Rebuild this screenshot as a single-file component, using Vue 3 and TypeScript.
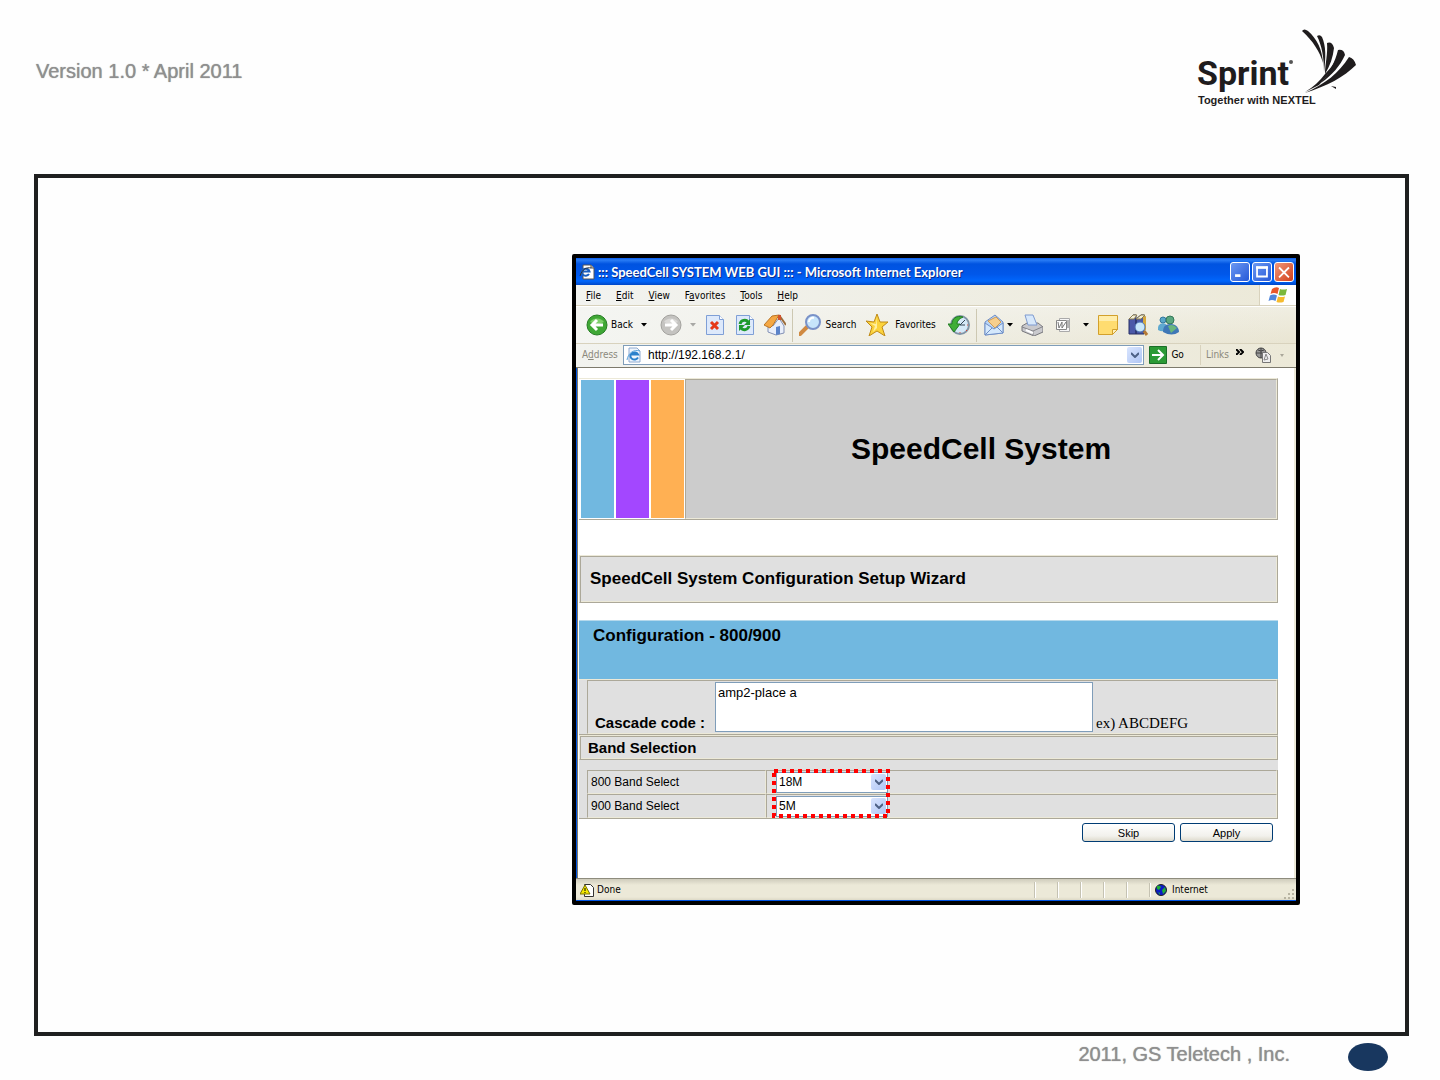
<script setup lang="ts">
import { ref } from 'vue'

interface MenuItem {
  before: string
  key: string
  after: string
}

interface Band {
  id: string
  label: string
  options: string[]
  value: string
}

const menus: MenuItem[] = [
  { before: '', key: 'F', after: 'ile' },
  { before: '', key: 'E', after: 'dit' },
  { before: '', key: 'V', after: 'iew' },
  { before: 'F', key: 'a', after: 'vorites' },
  { before: '', key: 'T', after: 'ools' },
  { before: '', key: 'H', after: 'elp' },
]

const address = ref('http://192.168.2.1/')
const cascade = ref('amp2-place a')
const bands = ref<Band[]>([
  { id: 'band-800', label: '800 Band Select', options: ['18M'], value: '18M' },
  { id: 'band-900', label: '900 Band Select', options: ['5M'], value: '5M' },
])
</script>

<template>
  <div class="sheet">
    <header class="sheet-head">
      <p class="note">Version 1.0 * April 2011</p>
      <svg class="logo" viewBox="1190 20 180 100" role="img" aria-label="Sprint">
        <text x="1197" y="85" class="logo-name">Sprint</text>
        <circle cx="1291" cy="62" r="2" fill="#555" />
        <text x="1198" y="104" class="logo-line">Together with NEXTEL</text>
        <g fill="#1f1c1d">
          <path d="M1302 31q2-3 6 0c9 8 14 18 15 32c-3-11-10-22-21-32z" />
          <path d="M1317 36q3-2 5 1c4 9 4 20 2 35c0-14-2-26-7-36z" />
          <path d="M1327 43q5-2 7 5c-1 9-4 18-9 26c0-10 3-20 2-31z" />
          <path d="M1338 50q6-1 7 5c-5 11-13 20-24 28c9-11 14-21 17-33z" />
          <path d="M1349 57q5 1 7 8c-12 12-29 21-51 28c20-9 34-20 44-36z" />
          <path d="M1325 74q6-6 11-14q-6 14-17 25l-14 7q12-7 20-18z" />
          <path d="M1331 86l5 1v2z" />
        </g>
      </svg>
    </header>

    <main class="frame">
      <section class="window" aria-label="SpeedCell SYSTEM WEB GUI">
        <div class="titlebar">
          <svg class="i16" viewBox="0 0 16 16">
            <path d="M4 1h8l3 3v11H4z" fill="#fff" stroke="#555" />
            <path d="M12 1v3h3" fill="#ccc" stroke="#555" />
            <path d="M10 10a4 3.500 0 1 1 .5-2.500H3" fill="none" stroke="#1a5fc0" stroke-width="2" />
            <path d="M1 12C3 5 8 3 12 4" fill="none" stroke="#333" />
          </svg>
          <h1>::: SpeedCell SYSTEM WEB GUI ::: - Microsoft Internet Explorer</h1>
          <div class="winbtns">
            <button type="button" aria-label="Minimize"><svg viewBox="0 0 19 20"><path d="M4 14h6" stroke="#fff" stroke-width="3" /></svg></button>
            <button type="button" aria-label="Maximize"><svg viewBox="0 0 19 20"><path d="M4 4v11h11V4" fill="none" stroke="#fff" stroke-width="2" /><path d="M3 5h13" stroke="#fff" stroke-width="3" /></svg></button>
            <button type="button" class="close" aria-label="Close"><svg viewBox="0 0 19 20"><path d="M4 5l11 11M15 5L4 16" stroke="#fff" stroke-width="2" /></svg></button>
          </div>
        </div>

        <div class="menubar">
          <nav>
            <button v-for="m in menus" :key="m.key" type="button">{{ m.before }}<u>{{ m.key }}</u>{{ m.after }}</button>
          </nav>
          <span class="flag">
            <svg viewBox="0 0 20 18">
              <path d="M4 3q4-3 7-1L9.500 8Q6 6 2.500 8z" fill="#e8572a" />
              <path d="M12 3q3 1 7 0l-1.500 6q-4 1-7 0z" fill="#7bb83c" />
              <path d="M2 9.500Q6 7.500 9 9.500L7.500 15Q4 13 .5 15z" fill="#4f86dc" />
              <path d="M10 10.500q3 1 7 0L15.500 16q-4 1-7 0z" fill="#f6bb2e" />
            </svg>
          </span>
        </div>

        <div class="toolbar">
          <button type="button" class="tool">
            <svg class="i22" viewBox="0 0 22 22">
              <circle cx="11" cy="11" r="10" fill="#3fa735" stroke="#267d24" />
              <path d="M4 8a8 7 0 0 1 14 0q-7 4-14 0z" fill="#7ed06b" />
              <path d="M17 11H7M11 6l-5 5l5 5" fill="none" stroke="#fff" stroke-width="3" />
            </svg>
            <span class="w-back">Back</span>
          </button>
          <button type="button" class="drop" aria-label="Back history"><svg viewBox="0 0 6 4"><path d="M0 0h6L3 3.500z" /></svg></button>
          <button type="button" class="tool after-drop" aria-label="Forward">
            <svg class="i22" viewBox="0 0 22 22">
              <circle cx="11" cy="11" r="10" fill="#c4c3c0" stroke="#a3a29e" />
              <path d="M4 8a8 7 0 0 1 14 0q-7 4-14 0z" fill="#dad9d7" />
              <path d="M5 11h10M11 6l5 5l-5 5" fill="none" stroke="#fff" stroke-width="3" />
            </svg>
          </button>
          <button type="button" class="drop faint" aria-label="Forward history"><svg viewBox="0 0 6 4"><path d="M0 0h6L3 3.500z" /></svg></button>
          <button type="button" class="tool" aria-label="Stop">
            <svg class="i22" viewBox="0 0 22 22">
              <path d="M2.500 1.500h13l4 4v15h-17z" fill="#dde9fb" stroke="#7f9fd6" />
              <path d="M15.500 1.500v4h4" fill="#fff" stroke="#7f9fd6" />
              <path d="M7 8l7 7M14 8l-7 7" stroke="#e5391a" stroke-width="3" />
            </svg>
          </button>
          <button type="button" class="tool" aria-label="Refresh">
            <svg class="i22" viewBox="0 0 22 22">
              <path d="M2.500 1.500h13l4 4v15h-17z" fill="#dde9fb" stroke="#7f9fd6" />
              <path d="M15.500 1.500v4h4" fill="#fff" stroke="#7f9fd6" />
              <path d="M6 10c1-4 6-5 8-2M15 12c-1 4-6 5-8 2" fill="none" stroke="#1d9a2c" stroke-width="3" />
              <path d="M16 5v6h-6zM5 17v-6h6z" fill="#1d9a2c" />
            </svg>
          </button>
          <button type="button" class="tool" aria-label="Home">
            <svg class="i22" viewBox="0 0 22 22">
              <path d="M4 10l5 2l6-8l5 8v7l-8 2l-8-3z" fill="#e9effb" stroke="#8391b5" />
              <path d="M0 11L8 2l7-1l-6 10l-3 3z" fill="#f5a843" stroke="#b97526" />
              <path d="M15 1l7 10" stroke="#9a6b3a" stroke-width="2" />
              <path d="M14 1h3v5h-3z" fill="#d2542d" />
              <path d="M12 13l4-1v8l-4 1z" fill="#5b83c9" />
            </svg>
          </button>
          <i class="sep"></i>
          <button type="button" class="tool">
            <svg class="i22" viewBox="0 0 22 22">
              <path d="M1 20l7-7" stroke="#d08a42" stroke-width="4" stroke-linecap="round" />
              <circle cx="14" cy="8" r="7" fill="#c7e5fb" stroke="#7a92c8" stroke-width="2" />
              <path d="M10 8a4 4 0 0 1 5-4" fill="none" stroke="#fff" stroke-width="2" />
            </svg>
            <span class="w-search">Search</span>
          </button>
          <button type="button" class="tool">
            <svg class="i22" viewBox="0 0 22 22">
              <path d="M11 0l3 8l8 0l-6 5l3 9l-8-5l-8 5l3-9l-6-6l8 1z" fill="#fbd33c" stroke="#bf8a18" />
              <path d="M11 3l-1 7l-6-1l5 3l-2 6l4-4z" fill="#fff0a0" />
            </svg>
            <span class="w-fav">Favorites</span>
          </button>
          <button type="button" class="tool" aria-label="History">
            <svg class="i22" viewBox="0 0 22 22">
              <circle cx="12" cy="11" r="9" fill="#d5e9f8" stroke="#8194a5" stroke-width="2" />
              <path d="M12 11l5-5M12 11h5" stroke="#345" />
              <path d="M18 16l1 1M12 18v1M19 11h1" stroke="#d43" />
              <path d="M15 3C8 1 4 5 4 10H0l6 8l6-8H9c0-3 2-5 6-7z" fill="#3eae36" stroke="#237c24" />
            </svg>
          </button>
          <i class="sep"></i>
          <button type="button" class="tool" aria-label="Mail">
            <svg class="i22" viewBox="0 0 22 22">
              <path d="M2 8l10-7l8 7v11l-18 2z" fill="#b9d5f6" stroke="#6f8fc7" />
              <path d="M5 7l8-4l5 5l-6 6z" fill="#f7cf8e" stroke="#d09b55" />
              <path d="M2 9l9 6l9-6v10l-18 2z" fill="#d4e8fc" stroke="#6f8fc7" />
              <path d="M2 21l7-7M20 19l-6-6" stroke="#6f8fc7" />
            </svg>
          </button>
          <button type="button" class="drop tight" aria-label="Mail options"><svg viewBox="0 0 6 4"><path d="M0 0h6L3 3.500z" /></svg></button>
          <button type="button" class="tool" aria-label="Print">
            <svg class="i22" viewBox="0 0 22 22">
              <path d="M1 12l5-3h11l5 4v5l-9 4l-12-5z" fill="#c9c9cd" stroke="#77777c" />
              <path d="M4 1h8l4 10H7z" fill="#d7e8fb" stroke="#7f9bd0" />
              <path d="M1 13l11 4l9-4M12 17v4" fill="none" stroke="#85858a" />
              <path d="M5 16l7 3" stroke="#fff" stroke-width="2" />
            </svg>
          </button>
          <button type="button" class="tool wide" aria-label="Edit">
            <svg class="i16" viewBox="0 0 16 16">
              <path d="M4.500 1.500h10v13h-10z" fill="#f6f6f6" stroke="#aaa" />
              <path d="M1.500 3.500h10v9h-10z" fill="#fff" stroke="#888" />
              <path d="M3 5l1 6l3-6v6l4-6M12 4h2M12 6h2M12 8h2M12 10h2" fill="none" stroke="#777" />
            </svg>
          </button>
          <button type="button" class="drop wide" aria-label="Edit options"><svg viewBox="0 0 6 4"><path d="M0 0h6L3 3.500z" /></svg></button>
          <button type="button" class="tool" aria-label="Discuss">
            <svg class="i22" viewBox="0 0 22 22">
              <path d="M1.500 1.500h19v14l-5 5h-14z" fill="#ffdc70" stroke="#d2a02c" />
              <path d="M2 2h18v5H2z" fill="#ffedaa" />
              <path d="M15.500 20.500v-5h5z" fill="#fff0b8" stroke="#d2a02c" />
            </svg>
          </button>
          <button type="button" class="tool" aria-label="Research">
            <svg class="i22" viewBox="0 0 22 22">
              <path d="M2 5l4-4h3v19H2zM9 5l5-4h3v19H9z" fill="#4b59a8" stroke="#293166" />
              <path d="M2 5h5l3-4H6zM9 5h5l4-4h-4z" fill="#f1eed8" stroke="#8a7c4f" />
              <path d="M16 3l3-1v14h-3z" fill="#d6a83c" />
              <circle cx="13" cy="13" r="5" fill="#c8e7fa" stroke="#4e75b5" />
              <path d="M17 17l3 4" stroke="#b57a35" stroke-width="3" />
            </svg>
          </button>
          <button type="button" class="tool" aria-label="Messenger">
            <svg class="i22" viewBox="0 0 22 22">
              <circle cx="6" cy="6" r="3" fill="#58a6c9" stroke="#34779c" />
              <path d="M1 16q-1-6 5-7q5 1 5 6q-5 4-10 1z" fill="#5fa9d0" />
              <circle cx="13" cy="6" r="4" fill="#5aa77e" stroke="#35785a" />
              <path d="M6 18c0-6 3-8 8-8c5 0 8 4 8 8q-7 5-16 0z" fill="#3f77b6" />
              <path d="M11 12q5-3 9 2l-6 5z" fill="#69b67d" />
            </svg>
          </button>
        </div>

        <div class="addressbar">
          <label for="address">A<u>d</u>dress</label>
          <div class="addressfield">
            <svg class="i16" viewBox="0 0 16 16">
              <path d="M3 1h8l3 3v11H3z" fill="#eef5fd" stroke="#8eaad0" />
              <path d="M12 10.500a4 3.500 0 1 1 0-3H5" fill="none" stroke="#2a81cc" stroke-width="2" />
              <path d="M1 13C2 6 8 2 14 4" fill="none" stroke="#5ba4dd" />
            </svg>
            <input id="address" v-model="address" type="text" />
            <button type="button" class="chev" aria-label="Show addresses"><svg viewBox="0 0 8 6"><path d="M0 1l4 4l4-4" fill="none" stroke="#4d6185" stroke-width="2" /></svg></button>
          </div>
          <button type="button" class="go">
            <svg viewBox="0 0 18 18">
              <path d="M.5.5h17v17H.5z" fill="#2b9a35" stroke="#1b6e28" />
              <path d="M3 9h10M9 4l5 5l-5 5" fill="none" stroke="#fff" stroke-width="2" />
            </svg>
            <span>Go</span>
          </button>
          <div class="links">
            <span>Links</span>
            <svg class="more-links" viewBox="0 0 8 6"><path d="M0 0l3 3l-3 3M4 0l3 3l-3 3" fill="none" stroke="#000" stroke-width="2" /></svg>
            <svg class="i16" viewBox="0 0 16 16">
              <circle cx="6" cy="6" r="5" fill="#999" stroke="#444" />
              <path d="M1 6h10M6 1v10M3 3q3 2 6 0" fill="none" stroke="#444" />
              <path d="M7.500 5.500h5l3 3v7h-8z" fill="#eee" stroke="#777" />
              <path d="M9 13l4-1l-2-5z" fill="none" stroke="#888" />
            </svg>
            <svg class="tiny" viewBox="0 0 4 3"><path d="M0 0h4L2 3z" fill="#aaa79a" /></svg>
          </div>
        </div>

        <div class="page">
          <div class="banner">
            <i class="stripe blue"></i><i class="stripe purple"></i><i class="stripe orange"></i>
            <h2>SpeedCell System</h2>
          </div>
          <h3 class="wizard">SpeedCell System Configuration Setup Wizard</h3>

          <form @submit.prevent>
            <h4 class="config">Configuration - 800/900</h4>
            <div class="cascade">
              <div class="cascade-cell">
                <label for="cascade">Cascade code :</label>
                <textarea id="cascade" v-model="cascade"></textarea>
                <span>ex) ABCDEFG</span>
              </div>
            </div>
            <h4 class="band-title">Band Selection</h4>
            <div class="bands">
              <table>
                <tbody>
                  <tr v-for="(band, i) in bands" :key="band.id">
                    <th scope="row"><label :for="band.id">{{ band.label }}</label></th>
                    <td>
                      <div class="picker">
                        <select :id="band.id" v-model="band.value">
                          <option v-for="o in band.options" :key="o">{{ o }}</option>
                        </select>
                        <span class="chev"><svg viewBox="0 0 8 6"><path d="M0 1l4 4l4-4" fill="none" stroke="#4d6185" stroke-width="2" /></svg></span>
                        <svg v-if="i === 0" class="marker" viewBox="0 0 118 49">
                          <rect x="2" y="2" width="114" height="45" fill="none" stroke="#f00" stroke-width="4" stroke-dasharray="4 4" />
                        </svg>
                      </div>
                    </td>
                  </tr>
                </tbody>
              </table>
            </div>
            <div class="actions">
              <button type="button">Skip</button>
              <button type="submit">Apply</button>
            </div>
          </form>
        </div>

        <footer class="status">
          <svg class="i14" viewBox="0 0 14 14">
            <path d="M4.500 1.500h6l3 3v9h-9z" fill="#fff" stroke="#333" />
            <path d="M5 2l5 9H0z" fill="#f5e900" stroke="#776f00" />
            <path d="M5 5v3M5 9v1" stroke="#000" />
          </svg>
          <span class="done">Done</span>
          <i v-for="n in 5" :key="n" class="pane"></i>
          <span class="zone">
            <svg viewBox="0 0 12 12">
              <circle cx="6" cy="6" r="5.500" fill="#0a1bc4" stroke="#222" />
              <path d="M2 2q3-1 4 1l-2 3l-2-1zM7 6l3-3l1 4l-3 3zM3 8l2 1v2z" fill="#1fae35" />
            </svg>
            Internet
          </span>
          <svg class="grip" viewBox="0 0 11 11"><path d="M8 0h2v2h-2zM8 4h2v2h-2zM8 8h2v2h-2zM4 4h2v2h-2zM4 8h2v2h-2zM0 8h2v2h-2z" fill="#b8b4a2" /></svg>
        </footer>
      </section>
    </main>

    <footer class="sheet-foot">
      <p class="note">2011, GS Teletech , Inc.</p>
      <span class="dot"></span>
    </footer>
  </div>
</template>

<style>
body {
  background: #fefefe;
}
</style>

<style scoped>
.sheet {
  box-sizing: border-box;
  min-height: 100vh;
  min-width: 1240px;
  display: flex;
  flex-direction: column;
  font-family: "Liberation Sans", Arial, sans-serif;
  color: #000;
}
.sheet *,
.sheet *::before {
  box-sizing: border-box;
}
h1, h2, h3, h4, p {
  margin: 0;
}
button {
  font: inherit;
  color: inherit;
  padding: 0;
  border: 0;
  background: none;
}
svg {
  display: block;
  flex: none;
}
i {
  display: block;
  flex: none;
}
.note {
  font-size: 20px;
  line-height: 24px;
  color: #8f8f8f;
  text-shadow: 0 0 1px #8f8f8f;
}
.sheet-head {
  height: 174px;
  padding: 20px 70px 0 36px;
  display: flex;
  justify-content: space-between;
}
.sheet-head .note {
  margin-top: 39px;
}
.logo {
  width: 180px;
  height: 100px;
}
.logo-name {
  font: bold 34px Roboto, sans-serif;
  fill: #1f1c1d;
}
.logo-line {
  font: bold 11px "Liberation Sans", sans-serif;
  fill: #1f1c1d;
}
.frame {
  flex: 1;
  margin: 0 31px 0 34px;
  padding: 76px 0 127px;
  border: 4px solid #1f2020;
  display: grid;
  grid-template-columns: 534fr 728fr 105fr;
  align-items: start;
}
.window {
  grid-column: 2;
  border: 4px solid #000;
  border-radius: 2px;
  background: #ece9d8;
  font-family: "DejaVu Sans Condensed", "DejaVu Sans", sans-serif;
  font-size: 10px;
  line-height: 14px;
}
.i22 {
  width: 22px;
  height: 22px;
}
.i16 {
  width: 16px;
  height: 16px;
}
.i14 {
  width: 14px;
  height: 14px;
}

/* title bar */
.titlebar {
  height: 27px;
  padding: 0 2px 0 3px;
  display: flex;
  align-items: center;
  gap: 3px;
  background: linear-gradient(#0b5be8, #2a7df5 2px, #0053e0 6px, #0057ea 60%, #0066fc 85%, #0047c8);
}
.titlebar h1 {
  flex: 1;
  font: bold 13px/16px Lato, sans-serif;
  color: #fff;
  text-shadow: 1px 1px 0 #0a2d8c;
}
.winbtns {
  display: flex;
  gap: 2px;
}
.winbtns button {
  width: 20px;
  height: 20px;
  border: 1px solid #fff;
  border-radius: 3px;
  background: linear-gradient(135deg, #6b98f2, #2659d8);
}
.winbtns .close {
  background: linear-gradient(135deg, #f0977a, #d3401b);
}
.winbtns svg {
  width: 18px;
  height: 18px;
}

/* menu bar */
.menubar {
  height: 21px;
  display: flex;
  justify-content: space-between;
  background: linear-gradient(90deg, #f2f3f0, #ece9d8);
  border-bottom: 1px solid #d8d2bd;
}
.menubar nav {
  display: flex;
  align-items: center;
  gap: 15px;
  padding: 1px 0 0 10px;
}
.flag {
  width: 37px;
  display: grid;
  place-items: center;
  background: #fff;
  border-left: 1px solid #d8d2bd;
}
.flag svg {
  width: 20px;
  height: 18px;
}

/* toolbar */
.toolbar {
  height: 38px;
  padding-left: 10px;
  display: flex;
  align-items: center;
  gap: 8px;
  border-top: 1px solid #fff;
  border-bottom: 1px solid #d8d2bd;
  background: linear-gradient(90deg, #f4f5f2, #ece9d800), linear-gradient(#f0eee2, #e9e5d2);
}
.tool {
  display: flex;
  align-items: center;
  gap: 3px;
}
.after-drop {
  margin-left: 5px;
}
.wide {
  margin-left: 4px;
}
.w-back {
  width: 22px;
}
.w-search {
  width: 34px;
}
.w-fav {
  width: 49px;
}
.drop svg {
  width: 6px;
  height: 4px;
}
.tight {
  margin-left: -6px;
}
.faint {
  opacity: 0.3;
}
.sep {
  width: 1px;
  height: 33px;
  margin: 0 -2px;
  background: #cdc8b2;
}

/* address bar */
.addressbar {
  height: 24px;
  padding: 1px 12px 2px 6px;
  display: flex;
  align-items: center;
  border-bottom: 1px solid #7d7a6c;
  background: linear-gradient(90deg, #f2f3ef, #ece9d8);
}
.addressbar label {
  width: 41px;
  color: #8b897c;
}
.addressfield {
  flex: 1;
  height: 20px;
  padding: 1px 1px 1px 2px;
  display: flex;
  align-items: center;
  gap: 6px;
  border: 1px solid #7f9db9;
  background: #fff;
}
.addressfield input {
  flex: 1;
  min-width: 0;
  height: 16px;
  padding: 0;
  border: 0;
  outline: 0;
  background: none;
  color: #000;
  font: 12px/16px "Liberation Sans", sans-serif;
}
.chev {
  width: 15px;
  height: 16px;
  display: grid;
  place-items: center;
  border-radius: 2px;
  background: linear-gradient(135deg, #d9e5fe, #b0c6f5);
}
.chev svg {
  width: 8px;
  height: 6px;
}
.go {
  display: flex;
  align-items: center;
  gap: 4px;
  margin-left: 5px;
}
.go svg {
  width: 18px;
  height: 18px;
}
.links {
  display: flex;
  align-items: center;
  height: 20px;
  margin-left: 16px;
  padding-left: 5px;
  border-left: 1px solid #d8d2bd;
  color: #8b897c;
}
.more-links {
  width: 8px;
  height: 6px;
  margin: 0 11px 6px 7px;
}
.tiny {
  width: 4px;
  height: 3px;
  margin-left: 9px;
}

/* web page */
.page {
  height: 510px;
  padding: 10px 16px 0 1px;
  background: #fff;
  border-left: 1px solid #7d7a6c;
  border-right: 1px solid #ece9d8;
  box-shadow: -1px 0 0 #0054e3;
  margin-left: 1px;
  margin-right: 1px;
  font-family: "Liberation Sans", Arial, sans-serif;
}
.banner {
  height: 142px;
  display: flex;
  padding-left: 2px;
  border: 1px solid #aca899;
  border-top-color: #ece9d8;
  border-left: 0;
}
.stripe {
  width: 33px;
  margin: 1px 2px 1px 0;
}
.blue {
  background: #71b8e0;
}
.purple {
  background: #a347ff;
}
.orange {
  background: #ffb053;
  margin-right: 1px;
}
.banner h2 {
  flex: 1;
  display: grid;
  place-items: center;
  background: #ccc;
  border: 1px solid #aca899;
  border-right-color: #ece9d8;
  border-bottom-color: #ece9d8;
  font-size: 30px;
  line-height: 36px;
}
.wizard {
  height: 48px;
  margin: 35px 0 17px;
  padding-left: 10px;
  background: #e0e0e0;
  border: 1px solid #aca899;
  border-left-color: #ece9d8;
  border-top-color: #ece9d8;
  box-shadow: inset 1px 1px 0 #aca899, inset -1px -1px 0 #ece9d8;
  font-size: 17px;
  line-height: 46px;
}
.config {
  height: 59px;
  padding: 5px 0 0 14px;
  background: #71b8e0;
  border-top: 1px solid #b5d9ec;
  font-size: 17px;
  line-height: 20px;
}
.cascade {
  height: 56px;
  padding-left: 8px;
  background: #e0e0e0;
  border: 1px solid #aca899;
  border-left: 0;
  border-top-color: #ece9d8;
}
.cascade-cell {
  height: 54px;
  padding: 1px 0 0 7px;
  display: flex;
  border: 1px solid #aca899;
  border-right-color: #ece9d8;
  border-bottom-color: #ece9d8;
}
.cascade-cell label {
  flex: none;
  width: 120px;
  padding-top: 31px;
  font: bold 15px/20px "Liberation Sans", sans-serif;
}
.cascade-cell textarea {
  flex: 0 1 378px;
  min-width: 0;
  height: 50px;
  padding: 2px;
  border: 1px solid #7f9db9;
  outline: 0;
  resize: none;
  background: #fff;
  color: #000;
  font: 13px/16px "Liberation Sans", sans-serif;
}
.cascade-cell span {
  flex: none;
  padding: 31px 0 0 3px;
  font: 15px/20px "Liberation Serif", serif;
}
.band-title {
  height: 25px;
  padding-left: 8px;
  background: #e0e0e0;
  border: 1px solid #aca899;
  border-top-color: #ece9d8;
  border-left-color: #ece9d8;
  box-shadow: inset 1px 1px 0 #aca899, inset -1px -1px 0 #ece9d8;
  font-size: 15px;
  line-height: 23px;
}
.bands {
  padding: 10px 0 0 8px;
  background: #e0e0e0;
  border-bottom: 1px solid #aca899;
}
.bands table {
  width: 100%;
  border-collapse: separate;
  border-spacing: 0;
  border-right: 1px solid #aca899;
}
.bands th,
.bands td {
  height: 24px;
  padding: 0;
  border: 1px solid #ece9d8;
  border-top-color: #aca899;
  border-left-color: #aca899;
}
.bands th {
  width: 179px;
  padding-left: 3px;
  text-align: left;
  font: 12px/16px "Liberation Sans", sans-serif;
}
.bands td {
  padding-left: 9px;
}
.picker {
  position: relative;
  width: 112px;
  height: 21px;
}
.picker select {
  appearance: none;
  width: 112px;
  height: 21px;
  padding: 0 0 0 2px;
  border: 1px solid #7f9db9;
  border-radius: 0;
  outline: 0;
  background: #fff;
  color: #000;
  font: 12px/16px "Liberation Sans", sans-serif;
}
.picker .chev {
  position: absolute;
  top: 2px;
  right: 2px;
  pointer-events: none;
}
.marker {
  position: absolute;
  top: -3px;
  left: -4px;
  width: 118px;
  height: 49px;
  z-index: 1;
  pointer-events: none;
}
.actions {
  display: flex;
  justify-content: flex-end;
  gap: 5px;
  padding: 4px 5px 0 0;
}
.actions button {
  width: 93px;
  height: 19px;
  border: 1px solid #003c74;
  border-radius: 3px;
  background: linear-gradient(#fff, #f2f1ec 70%, #dedacd);
  font-size: 11px;
  line-height: 16px;
}

/* status bar */
.status {
  height: 23px;
  padding: 1px 1px 0 4px;
  display: flex;
  align-items: center;
  border-top: 1px solid #8e8c7e;
  border-bottom: 1px solid #0054e3;
  background: linear-gradient(#cfccbc, #ece9d8 6px, #ece9d8 18px, #ddd9c6);
}
.done {
  flex: 1;
  padding-left: 3px;
}
.pane {
  width: 23px;
  height: 16px;
  border-left: 1px solid #c5c2b2;
  box-shadow: inset 1px 0 0 #fff;
}
.zone {
  width: 135px;
  display: flex;
  align-items: center;
  gap: 5px;
  padding-left: 5px;
  border-left: 1px solid #c5c2b2;
  box-shadow: inset 1px 0 0 #fff;
}
.zone svg {
  width: 12px;
  height: 12px;
}
.grip {
  width: 11px;
  height: 11px;
  align-self: flex-end;
}

/* sheet footer */
.sheet-foot {
  height: 44px;
  padding: 6px 52px 0 0;
  display: flex;
  justify-content: flex-end;
  align-items: flex-start;
  gap: 58px;
}
.dot {
  width: 40px;
  height: 28px;
  margin-top: 1px;
  border-radius: 50%;
  background: #18375f;
}
</style>
